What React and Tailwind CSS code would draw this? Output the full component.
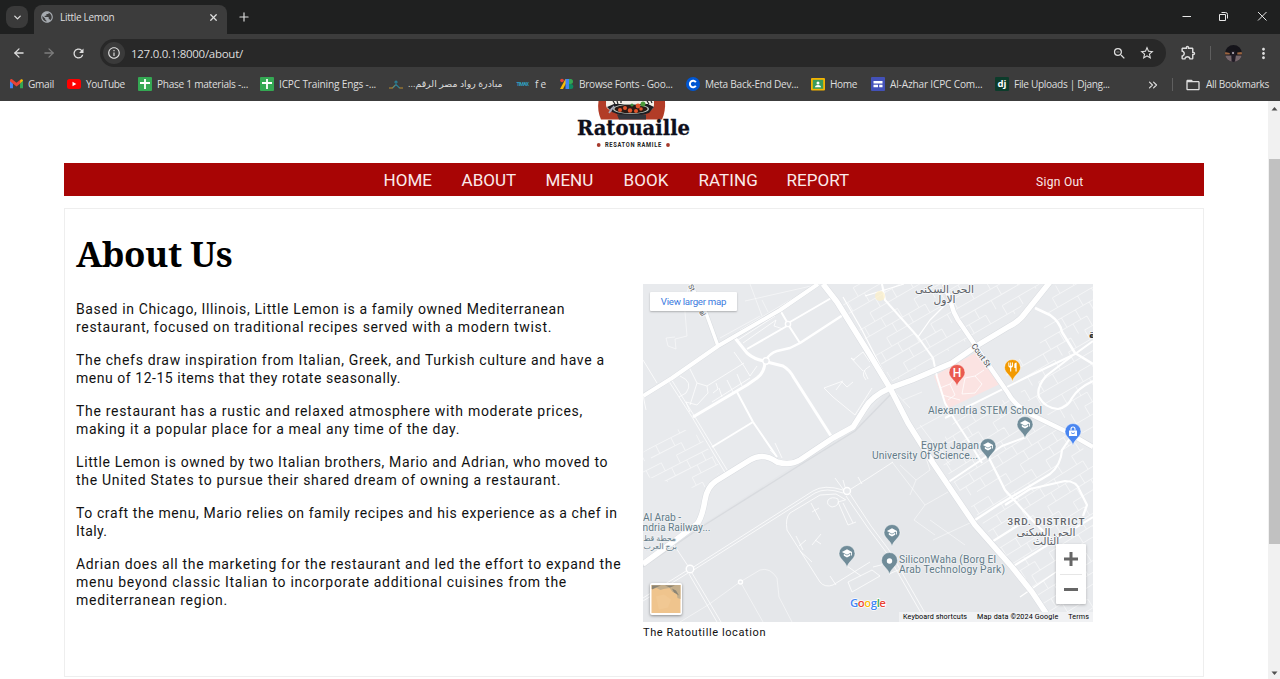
import React from "react";
import { ChevronDown, X, Plus, ArrowLeft, ArrowRight, ChevronsRight } from "lucide-react";
import { MdPublic, MdRefresh, MdInfoOutline, MdZoomOut, MdStarBorder, MdOutlineExtension, MdMoreVert, MdFolderOpen, MdSchool, MdRestaurant } from "react-icons/md";

const UI = "font-['Open_Sans','DejaVu_Sans',sans-serif]";

/* ---------- bookmark icons ---------- */
const GmailIcon = () => (
  <svg viewBox="0 0 24 18" className="w-[13px] h-[10px]">
    <path d="M0 2v15h5.500V8z" fill="#4285f4" />
    <path d="M24 2v15h-5.500V8z" fill="#34a853" />
    <path d="M18.500 1.500L21 0c2 0 3 1 3 3l-5.500 5z" fill="#fbbc04" />
    <path d="M0 3c0-3 3-4 5-2l7 5.500L19 1v7l-7 5.500L0 4z" fill="#ea4335" />
  </svg>
);
const YouTubeIcon = () => (
  <svg viewBox="0 0 14 10" className="w-[14px] h-[10px]">
    <rect width="14" height="10" rx="2.500" fill="#f00" />
    <path d="M5.500 2.800v4.400L9.300 5z" fill="#fff" />
  </svg>
);
const SheetIcon = () => (
  <svg viewBox="0 0 14 14" className="w-[14px] h-[14px]">
    <rect width="14" height="14" rx="1" fill="#34a853" />
    <path d="M7 2v10M2 6h10" stroke="#fff" strokeWidth="1.800" />
  </svg>
);
const PioneerIcon = () => (
  <svg viewBox="0 0 14 10" className="w-[14px] h-[10px]" fill="none">
    <path d="M0 9h3.500L6.500 6M10 8.500l1 .5h3" stroke="#b98b2f" strokeWidth="1.100" />
    <path d="M5.500 3.500L7 2l1.500 1.500M7 3v2.500L10.500 9M7 5.500L4 9" stroke="#2a7f96" strokeWidth="1.100" />
  </svg>
);
const TimaxIcon = () => (
  <svg viewBox="0 0 14 6" className="w-[14px] h-[6px]">
    <text x="0.500" y="5" fontSize="5" fontWeight="700" fill="#2f9fc0" textLength="12.500" fontFamily="Roboto">TIMAX</text>
  </svg>
);
const FontsIcon = () => (
  <svg viewBox="0 0 14 12" className="w-[14px] h-[12px]">
    <path d="M5.500 1L8 1.500 3 11H0z" fill="#fbbc04" />
    <circle cx="2" cy="2.500" r="1.800" fill="#ea4335" />
    <path d="M5.500 1H9v10H5.500z" fill="#4285f4" />
    <path d="M9 1h1.500a2.500 2.500 0 010 5H9z" fill="#34a853" />
    <path d="M9 6h1.800a2.500 2.500 0 010 5H9z" fill="#0f8a5f" />
  </svg>
);
const CourseraIcon = () => (
  <svg viewBox="0 0 14 14" className="w-[14px] h-[14px]">
    <circle cx="7" cy="7" r="7" fill="#0056d2" />
    <path d="M9.800 5.300a3.200 3.200 0 100 3.400" stroke="#fff" strokeWidth="2" fill="none" />
  </svg>
);
const ClassroomIcon = () => (
  <svg viewBox="0 0 14 13" className="w-[14px] h-[13px]">
    <rect width="14" height="12.500" rx="1" fill="#f4b400" />
    <rect x="1.800" y="1.800" width="10.400" height="9" fill="#3b9b5b" />
    <circle cx="7" cy="4.900" r="1.500" fill="#fff" />
    <path d="M4 9.200c0-3 6-3 6 0z" fill="#fff" />
  </svg>
);
const SitesIcon = () => (
  <svg viewBox="0 0 14 14" className="w-[14px] h-[14px]">
    <rect width="14" height="14" rx="1" fill="#4351b8" />
    <path d="M2.500 4h9v2.500h-9zM2.500 7.700H7v2.500H2.500zM8.200 7.700h3.300v2.500H8.200z" fill="#fff" />
  </svg>
);
const DjangoIcon = () => (
  <svg viewBox="0 0 14 14" className="w-[14px] h-[14px]">
    <rect width="14" height="14" rx="1" fill="#0c3c2b" />
    <text x="2.600" y="9.800" fontSize="9.500" fontWeight="700" fill="#fff" fontFamily="Open Sans">dj</text>
  </svg>
);

const bookmarks = [
  { icon: <GmailIcon />, label: "Gmail", box: "w-[57px]", text: "tracking-[-0.3px]" },
  { icon: <YouTubeIcon />, label: "YouTube", box: "w-[71px]", text: "tracking-[-0.38px]" },
  { icon: <SheetIcon />, label: "Phase 1 materials -...", box: "w-[122px]", text: "tracking-[-0.27px]" },
  { icon: <SheetIcon />, label: "ICPC Training Engs -...", box: "w-[129px]", text: "tracking-[-0.17px]" },
  { icon: <PioneerIcon />, label: "مبادرة رواد مصر الرقم...", box: "w-[127px]", text: "text-[9.4px]", dir: "rtl" },
  { icon: <TimaxIcon />, label: "f e", box: "w-[44px]", text: "tracking-[-0.3px]" },
  { icon: <FontsIcon />, label: "Browse Fonts - Goo...", box: "w-[126px]", text: "tracking-[-0.28px]" },
  { icon: <CourseraIcon />, label: "Meta Back-End Dev...", box: "w-[125px]", text: "tracking-[-0.26px]" },
  { icon: <ClassroomIcon />, label: "Home", box: "w-[60px]", text: "tracking-[-0.35px]" },
  { icon: <SitesIcon />, label: "Al-Azhar ICPC Com...", box: "w-[124px]", text: "tracking-[-0.17px]" },
  { icon: <DjangoIcon />, label: "File Uploads | Djang...", box: "w-[130px]", text: "tracking-[-0.33px]" },
];

function BrowserChrome() {
  return (
    <header className={"h-[101px] flex-none bg-[#3c3c3c] text-[#dedede] " + UI}>
      <div className="flex h-[34px] bg-[#1f2020] pl-[6px]">
        <div className="mt-[6px] flex h-[22px] w-[22px] items-center justify-center rounded-[8px] bg-[#3a3a3a]">
          <ChevronDown size={11} strokeWidth={2.800} />
        </div>
        <div className="ml-[6px] mt-[5px] flex h-[29px] w-[193px] items-center rounded-t-[8px] bg-[#3c3c3c] pb-[5px] pl-[6px] pr-[8px]">
          <MdPublic size={14} className="text-[#a6abb0]" />
          <span className="ml-[6px] pt-[1px] text-[10px] tracking-[-0.3px]">Little Lemon</span>
          <X size={11} strokeWidth={2.800} className="ml-auto" />
        </div>
        <Plus size={14} strokeWidth={2} className="ml-[10px] mt-[10px]" />
        <svg viewBox="0 0 100 20" className="ml-auto mt-[7px] h-[20px] w-[100px]" fill="none" stroke="#e8e8e8">
          <path d="M2.500 9.500h8.500" />
          <path d="M39.500 7.500h6v6h-6z M41.500 5.500h4q2 0 2 2v4" strokeWidth="1" />
          <path d="M78 5l8.500 8.500M86.500 5L78 13.500" />
        </svg>
      </div>
      <div className="flex h-[38px] items-center pl-[12px] pr-[10px]">
        <ArrowLeft size={14} strokeWidth={2.200} />
        <ArrowRight size={14} strokeWidth={2.200} className="ml-[16px] text-[#7d7d7d]" />
        <MdRefresh size={15} className="ml-[15px]" />
        <div className="ml-[14px] flex h-[28px] w-[1066px] items-center rounded-full bg-[#282828] pl-[3px] pr-[11px]">
          <span className="flex h-[22px] w-[22px] items-center justify-center rounded-full bg-[#3a3a3a]">
            <MdInfoOutline size={14} />
          </span>
          <span className="ml-[6px] pt-[1px] text-[11.5px] tracking-[-0.28px]">127.0.0.1:8000/about/</span>
          <MdZoomOut size={15} className="ml-auto" />
          <MdStarBorder size={16} className="ml-[12px]" />
        </div>
        <MdOutlineExtension size={17} className="ml-[14px] -mt-[2px]" />
        <span className="ml-[13px] h-[14px] w-px bg-[#5f5f5f]" />
        <svg viewBox="0 0 18 18" className="ml-[14px] h-[17px] w-[17px]">
          <clipPath id="avatar"><circle cx="9" cy="9" r="9" /></clipPath>
          <g clipPath="url(#avatar)">
            <rect width="18" height="18" fill="#15141a" />
            <path d="M0 7.500l5 1v1.500H0zM13 8l5-.5v2.500h-5z" fill="#9b6541" />
            <path d="M0 11h18v7H0z" fill="#75666c" />
            <path d="M6.500 6h4l1 5-1 7H7z" fill="#211c26" />
            <circle cx="8.500" cy="8.500" r="1.100" fill="#b8b3be" />
          </g>
        </svg>
        <MdMoreVert size={17} className="ml-auto -mr-[2px]" />
      </div>
      <div className="flex h-[25px] items-center pl-[10px] pr-[11px] text-[10.1px]">
        {bookmarks.map((b) => (
          <div key={b.label} className={"flex flex-none items-center gap-[5px] whitespace-nowrap " + b.box}>
            {b.icon}
            <span dir={b.dir} className={b.text}>{b.label}</span>
          </div>
        ))}
        <ChevronsRight size={14} strokeWidth={2} className="ml-[21px]" />
        <span className="ml-[12px] h-[13px] w-px bg-[#5f5f5f]" />
        <MdFolderOpen size={16} className="ml-[12px]" />
        <span className="ml-auto whitespace-nowrap tracking-[-0.32px]">All Bookmarks</span>
      </div>
    </header>
  );
}

/* ---------- restaurant logo ---------- */
function Logo() {
  return (
    <svg viewBox="570 101 130 55" className="ml-[506px] block h-[55px] w-[130px]">
      <path d="M598.500 101h66.500c.5 7-.5 13-3 18.500h-61c-2.500-5.500-3.500-11.500-2.500-18.500z" fill="#b23c27" />
      <path d="M606 101h48v4c0 6-9 10-22 10s-26-4-26-10z" fill="#f3efe8" />
      <path d="M607 107l7-3h34l6 3-5 6-7 2h-22l-8-3z" fill="#1d1d22" />
      <ellipse cx="631" cy="109" rx="18" ry="5" fill="#b9c4bd" />
      <ellipse cx="631" cy="109" rx="16.500" ry="4.200" fill="#2b1a15" />
      <g fill="#e2552c">
        <circle cx="620" cy="110" r="2" /><circle cx="625" cy="108" r="2" /><circle cx="630" cy="110.500" r="2.200" />
        <circle cx="636" cy="111" r="2" /><circle cx="638" cy="106" r="2.400" /><circle cx="641" cy="109" r="1.800" />
      </g>
      <path d="M613 101l2 3M617 101l1 3M621 101v2M647 101l2 3M651 101l1 2" stroke="#222" strokeWidth="1.200" />
      <circle cx="632" cy="105" r="1.600" fill="#3f8f3c" /><circle cx="643" cy="104" r="2.500" fill="#4b9a3a" />
      <path d="M612 108l-3 5M614 106l-4 6" stroke="#aab" strokeWidth="1.500" />
      <path d="M617 114.500h29v5h-27z" fill="#34363c" />
      <text x="577" y="134.500" fontSize="20" fontWeight="700" fontFamily="'DejaVu Serif',serif" textLength="113" lengthAdjust="spacingAndGlyphs" fill="#0e0f1c" stroke="#0e0f1c" strokeWidth="0.300">Ratouaille</text>
      <text x="605" y="147" fontSize="7.400" fontWeight="700" fontFamily="'Roboto',sans-serif" fill="#222" transform="translate(605 0) scale(.78 1) translate(-605 0)" textLength="72">RESATON RAMILE</text>
      <circle cx="598.700" cy="145" r="1.900" fill="#a63a2c" /><circle cx="668" cy="145" r="1.900" fill="#a63a2c" />
    </svg>
  );
}

const navItems = [
  ["HOME", "w-[78px]"], ["ABOUT", "w-[84px]"], ["MENU", "w-[78px]"],
  ["BOOK", "w-[75px]"], ["RATING", "w-[88px]"], ["REPORT", "w-[249.5px]"],
];

const paragraphs = [
  [["Based in Chicago, Illinois, Little Lemon is a family owned Mediterranean", "tracking-[0.63px]"],
   ["restaurant, focused on traditional recipes served with a modern twist.", "tracking-[0.67px]"]],
  [["The chefs draw inspiration from Italian, Greek, and Turkish culture and have a", "tracking-[0.667px]"],
   ["menu of 12-15 items that they rotate seasonally.", "tracking-[0.535px]"]],
  [["The restaurant has a rustic and relaxed atmosphere with moderate prices,", "tracking-[0.698px]"],
   ["making it a popular place for a meal any time of the day.", "tracking-[0.645px]"]],
  [["Little Lemon is owned by two Italian brothers, Mario and Adrian, who moved to", "tracking-[0.61px]"],
   ["the United States to pursue their shared dream of owning a restaurant.", "tracking-[0.7px]"]],
  [["To craft the menu, Mario relies on family recipes and his experience as a chef in", "tracking-[0.6px]"],
   ["Italy.", "tracking-[0.4px]"]],
  [["Adrian does all the marketing for the restaurant and led the effort to expand the", "tracking-[0.665px]"],
   ["menu beyond classic Italian to incorporate additional cuisines from the", "tracking-[0.726px]"],
   ["mediterranean region.", "tracking-[0.737px]"]],
];

/* ---------- map ---------- */

// Brick-like street grid covering a box, rotated about its centre.
function streetGrid(cx, cy, size, row, col) {
  let d = "";
  let k = 0;
  for (let y = -size; y <= size; y += row) {
    for (let x = -size + ((k * 7) % col); x <= size; x += col) {
      const pick = Math.abs(k * 5 + Math.round(x) * 3) % 7;
      if (pick > 1) d += `M${cx + x} ${cy + y}v${row}`;
      if (pick !== 3) d += `M${cx + x} ${cy + y}h${col}`;
    }
    k += 1;
  }
  return d;
}

const districts = [
  { id: "nw", shape: "842,284 1040,284 1015,314 968,340 893,382 840,300", grid: streetGrid(940, 330, 120, 10, 19), rot: "rotate(-30 940 330)" },
  { id: "ne", shape: "1056,284 1093,284 1093,438 1034,408 1000,368 1038,350", grid: streetGrid(1050, 350, 110, 11, 16), rot: "rotate(-30 1050 350)" },
  { id: "se", shape: "955,420 1008,398 1093,455 1093,622 1056,622 1000,548 952,480 936,452", grid: streetGrid(1020, 500, 150, 10, 17), rot: "rotate(-32 1020 500)" },
  { id: "sw", shape: "643,452 680,428 700,436 722,470 702,490 643,476", grid: streetGrid(680, 460, 60, 9, 17), rot: "rotate(-27 680 460)" },
];

const mainRoads = [
  ["M643 396L672 378L718 346L780 310L818 284", 4],
  ["M690 284L706 313L718 346", 3.5],
  ["M823 284L837 302L870 355L890 388L908 423L933 463L975 525L1012 567L1032 592L1052 622", 5.5],
  ["M1050 282L1022 317Q1015 324 1008 327L978 345L952 363L912 380L890 388Q872 396 865 408L853 427L833 438L800 460Q790 466 777 462Q763 452 750 460L716 481Q707 487 705 500Q702 518 697 524L673 542L643 564", 5.5],
  ["M944 284L951 303Q953 312 958 320L992 370L1008 393Q1014 405 1032 415L1065 431L1093 447", 4.5],
];

const roads = [
  ["M735 338L747 353Q755 360 765 361", 3],
  ["M765 361Q770 353 777 351L790 348L800 343L843 315", 2.5],
  ["M765 361Q765 372 757 378L747 385L693 417", 3],
  ["M767 362L783 366Q790 370 794 378L810 403L831 436", 3],
  ["M780 310L787 322M789 326L800 343", 2],
  ["M790 322L833 297M747 349L787 326", 2],
  ["M737 392L753 422L777 457", 2],
  ["M712 447L753 422", 2],
  ["M882 284L885 300L918 337L933 358L937 377L945 403L955 420L968 440L982 463", 2],
  ["M1035 308L1050 315Q1060 322 1062 332L1075 353L1093 364", 2.5],
  ["M1093 341L1075 354L1025 378L945 418", 2],
  ["M1072 356L1046 376Q1036 388 1039 397Q1045 408 1058 409Q1068 407 1072 398Q1078 388 1093 381", 2.2],
  ["M975 520L998 505L1050 474Q1061 465 1062 450L1073 434", 2.2],
  ["M985 450L1005 490L1032 520L1055 543", 2.2],
  ["M990 543L1030 518M1005 505L1030 489L1065 481Q1077 481 1080 491L1087 505L1083 516", 2.2],
  ["M947 483L1002 446L1026 437M1012 567L1093 517", 2],
  ["M865 296L904 284M843 297L862 330L884 373", 1.2],
  ["M1020 597L1056 572M950 300L930 320L918 337", 1.3],
];

const lanes = [
  "M668 380L692 417L718 461L726 474", "M671 379L695 417L721 460L729 473",
  "M692 568L813 491Q824 484 843 490M692 571L815 493Q826 487 843 493", "M851 489L870 477L893 462",
  "M686 571L643 598M688 573L643 601", "M688 566L674 545M692 573L721 622M689 574L717 622",
  "M846 496L868 528L886 552L921 613M850 494L871 526L889 550L925 613",
  "M820 495L790 513Q785 518 787 530L820 582Q825 588 833 585L870 562M820 495L836 494L846 500",
  "M743 343L776 320L774 326L783 329M738 340L775 316", "M643 360L657 383M643 395L646 410",
  "M680 376Q694 382 686 393L679 397M690 405L697 383L707 386L708 393L697 405L686 402L690 412M707 386L744 363M713 393L718 389L716 383M712 402L750 378",
  "M722 397L719 388M733 392L727 380M742 386L737 374M689 367L697 383M734 352L744 366L750 376L757 366",
  "M824 388L843 381M824 388L833 397L855 415L872 388M836 390L842 382L847 387L853 382M855 360L851 358L863 371M868 379L864 370",
  "M853 360L863 352L870 362M866 380Q859 372 870 366M811 503L820 520M812 512L819 508M845 500L838 502L848 525L856 522M843 503L853 523",
  "M828 500Q832 496 838 499Q840 506 832 507Q826 505 828 500M796 536L803 550M799 546L806 540M800 551L812 562M815 540L821 544M812 545L821 534M830 576L836 585",
  "M848 582L872 570L880 576L852 592ZM873 567L893 562M889 574L903 568M847 566L861 576",
  "M843 480L845 487M858 477L862 484M843 489L835 478M777 457L770 450M775 443L782 458",
  "M940 388L950 384L955 395L948 400M965 378L975 376L982 384L975 393L962 394L965 378M950 384L957 376M942 395L960 400M975 376L984 370",
];

const faintLanes = [
  "M690 284L684 300L687 336L675 339L676 349L668 346L666 338L675 337M750 284L762 316M720 338L760 316",
  "M740 330L792 299M762 300L768 312M745 301L820 284",
  "M708 605L740 582L760 570Q770 567 777 578L779 597L792 622M741 583L763 622M708 605L680 622",
  "M892 462L925 505L948 492M930 520L965 545M925 505L914 520L935 535M900 465L916 480L910 495M916 480L930 470L925 455M933 540L972 522",
  "M895 392L910 408M903 400L922 392M915 430L948 412M860 420L843 436M920 425L950 465M930 450L955 440",
];

function Pin({ x, y, color, children }) {
  return (
    <g transform={`translate(${x} ${y})`}>
      <path d="M0 13.500C-1 7.500-8 5-8-.5A8 8 0 018-.5C8 5 1 7.500 0 13.500z" fill={color} stroke="#fff" strokeOpacity="0.600" strokeWidth="0.800" />
      {children}
    </g>
  );
}

const schoolPins = [[1025, 425], [988, 447], [892, 533], [847, 554]];

// [text, x, baseline, width]
const placeLabels = [
  ["Alexandria STEM School", 928, 413.5, 114],
  ["University Of Science...", 872, 459, 106],
  ["Egypt Japan", 921, 448.5, 58],
  ["Arab Technology Park)", 899, 573, 106],
  ["SiliconWaha (Borg El", 899, 562.5, 97],
  ["ndria Railway...", 642.5, 531, 68],
  ["Al Arab -", 643, 520.500, 38],
];

function MapArt() {
  return (
    <svg viewBox="643 284 450 338" className="block h-[338px] w-[450px]" fontFamily="Roboto,'DejaVu Sans',sans-serif">
      <rect x="643" y="284" width="450" height="338" fill="#e8eaed" />
      <path d="M643 564L703 524L797 464L853 430L890 388L933 463L1052 622L643 622z" fill="#e5e7ea" />
      {districts.map((d) => (
        <g key={d.id}>
          <clipPath id={d.id}><polygon points={d.shape} /></clipPath>
          <g clipPath={`url(#${d.id})`}>
            <path d={d.grid} transform={d.rot} fill="none" stroke="#fff" strokeOpacity="0.550" strokeWidth="0.900" />
          </g>
        </g>
      ))}
      <path d="M934 376L975 353L1002 383L947 409z" fill="#fbe3e2" />
      <path d="M893 392L855 431L800 465L703 526L643 567" fill="none" stroke="#d3d6da" strokeWidth="1.300" opacity="0.700" />
      {faintLanes.map((d) => (
        <path key={d} d={d} fill="none" stroke="#fff" strokeOpacity="0.550" strokeWidth="0.900" strokeLinejoin="round" />
      ))}
      {lanes.map((d) => (
        <path key={d} d={d} fill="none" stroke="#fff" strokeOpacity="0.850" strokeWidth="0.900" strokeLinejoin="round" />
      ))}
      {roads.map(([d, w]) => (
        <path key={d} d={d} fill="none" stroke="#fff" strokeWidth={w} strokeLinejoin="round" />
      ))}
      {mainRoads.map(([d, w]) => (
        <path key={d} d={d} fill="none" stroke="#d9dce0" strokeWidth={w + 1} strokeLinejoin="round" />
      ))}
      {mainRoads.map(([d, w]) => (
        <path key={d} d={d} fill="none" stroke="#fff" strokeWidth={w} strokeLinejoin="round" />
      ))}
      <g fill="#e8eaed" stroke="#fff" strokeWidth="1.400">
        <circle cx="788" cy="324" r="2.600" /><circle cx="766" cy="361" r="3.200" />
        <circle cx="690" cy="569" r="3.800" /><circle cx="847" cy="491" r="3.500" /><circle cx="740.500" cy="582" r="2" />
      </g>
      <circle cx="880" cy="296" r="5" fill="#fcf0c8" opacity="0.700" />

      <g fill="#637b88" stroke="#f0f2f4" strokeWidth="1.600" strokeLinejoin="round" paintOrder="stroke" fontSize="10.300">
        {placeLabels.map(([t, x, y, w]) => (
          <text key={t} x={x} y={y} textLength={w}>{t}</text>
        ))}
        <g fontSize="7.800">
          <text x="676" y="540.500" textAnchor="end" direction="ltr">محطة قط</text>
          <text x="677" y="549" textAnchor="end" direction="ltr">برج العرب</text>
        </g>
      </g>
      <g fill="#5f6368" stroke="#f4f6f8" strokeWidth="2" strokeLinejoin="round" paintOrder="stroke">
        <text x="1007.500" y="525.300" fontSize="9.800" fontWeight="500" textLength="77">3RD. DISTRICT</text>
        <g fontSize="10.800" textAnchor="middle">
          <text x="944.500" y="293">الحى السكنى</text>
          <text x="944.500" y="302.500">الاول</text>
          <text x="1046" y="535.500">الحى السكنى</text>
          <text x="1046" y="545">الثالث</text>
        </g>
        <text x="1089" y="338" fontSize="11" fontWeight="700" fill="#333">ة</text>
        <text fontSize="8" fill="#444" transform="translate(971 346) rotate(54)" textLength="27">Court St</text>
        <text fontSize="7" fill="#555" transform="translate(688 286) rotate(62)">St</text>
        <text fontSize="7" fill="#555" transform="translate(699 312) rotate(62)">al</text>
      </g>

      <Pin x={957} y={373} color="#ea5a50">
        <text x="0" y="4.300" fontSize="12" fontWeight="500" fill="#fff" textAnchor="middle">H</text>
      </Pin>
      <Pin x={1012.5} y={368} color="#f29900">
        <MdRestaurant x="-5.500" y="-6.500" size={11} color="#fff" />
      </Pin>
      <Pin x={1073} y={432} color="#4a86f0">
        <path d="M-2-1.500v-1.500a2 2 0 014 0v1.500" fill="none" stroke="#fff" strokeWidth="1.100" />
        <path d="M-4-1.500h8v5.500h-8z" fill="#fff" />
        <path d="M-2 .7q2 2 4 0" stroke="#4a86f0" strokeWidth="0.900" fill="none" />
      </Pin>
      {schoolPins.map(([x, y]) => (
        <Pin key={x} x={x} y={y} color="#708c99">
          <MdSchool x="-5.500" y="-6.200" size={11} color="#fff" />
        </Pin>
      ))}
      <Pin x={889.5} y={561} color="#708c99"><circle r="2.700" fill="#fff" /></Pin>

      <text x="850" y="607" fontSize="11.500" fontFamily="'Open Sans',sans-serif" fontWeight="600" textLength="36" stroke="#fff" strokeWidth="1.500" paintOrder="stroke">
        <tspan fill="#4285f4">G</tspan><tspan fill="#ea4335">o</tspan><tspan fill="#fbbc04">o</tspan>
        <tspan fill="#4285f4">g</tspan><tspan fill="#34a853">l</tspan><tspan fill="#ea4335">e</tspan>
      </text>
    </svg>
  );
}

function MapPanel() {
  return (
    <div className="relative h-[338px] w-[450px] overflow-hidden font-['Roboto',sans-serif]">
      <MapArt />
      <div className="absolute left-[7px] top-[8px] flex h-[19px] w-[87px] items-center justify-center whitespace-nowrap rounded-[1px] bg-white pt-px text-[9.7px] tracking-[-0.29px] text-[#3b7be0] shadow-[0_1px_2px_rgba(0,0,0,0.25)]">
        View larger map
      </div>
      <svg viewBox="0 0 32 31" className="absolute left-[7px] top-[299px] h-[32px] w-[32px] rounded-[2px] bg-white shadow-[0_1px_3px_rgba(0,0,0,0.4)]">
        <rect x="1.500" y="1.500" width="29" height="28" fill="#efc48d" />
        <path d="M1.500 1.500h29v14l-3-1-1-5-4-1-3-4-6 1-3 1-4-2-5 1z" fill="#c4ae8b" />
        <path d="M2 2h9l-5 2-4 2zM15 2l5 2 5-2zM22 5l4 2 3 5-5-3z" fill="#8b8474" />
        <path d="M6 13l8-2 7 5-3 8-9 2z" fill="#f1c893" />
      </svg>
      <div className="absolute left-[413px] top-[260px] flex h-[60px] w-[30px] flex-col rounded-[1px] bg-white shadow-[0_1px_3px_rgba(0,0,0,0.25)]">
        <svg viewBox="0 0 30 60" className="h-[60px] w-[30px]" stroke="#666" strokeWidth="3">
          <path d="M8 15h14M15 8v14M8 45.500h14" />
          <path d="M4 30.500h22" stroke="#e6e6e6" strokeWidth="1" />
        </svg>
      </div>
      <div className="absolute bottom-0 right-0 flex h-[10px] w-[194px] items-center justify-between whitespace-nowrap bg-[#f1f2f4] pl-[4px] pr-[4px] text-[7.2px] text-black">
        <span className="tracking-[0.1px]">Keyboard shortcuts</span>
        <span className="tracking-[0.14px]">Map data ©2024 Google</span>
        <span className="tracking-[0.1px]">Terms</span>
      </div>
    </div>
  );
}

export default function App() {
  return (
    <div className="flex h-[679px] w-[1280px] flex-col overflow-hidden bg-white">
      <BrowserChrome />
      <div className="flex min-h-0 flex-1 justify-between">
        <main className="ml-[63.5px] w-[1140.5px] font-['Roboto',sans-serif] text-[#111]">
          <div className="h-[62px]"><Logo /></div>
          <nav className="flex h-[33px] items-center bg-[#a80505] pl-[320px] text-[17px] text-[#fbeaea]">
            {navItems.map(([label, box]) => (
              <a key={label} className={"flex-none pt-[2px] tracking-[0.05px] " + box}>{label}</a>
            ))}
            <a className="whitespace-nowrap pt-[4px] text-[12px] tracking-[0.3px]">Sign Out</a>
          </nav>
          <section className="mt-[12px] flex h-[469px] border border-[#eeeeee] pl-[11.5px]">
            <div className="w-[567px]">
              <h1 className="mt-[18px] h-[54px] whitespace-nowrap font-['Noto_Serif','DejaVu_Serif',serif] text-[35px] font-bold leading-[54px] tracking-[-0.5px] text-black">About Us</h1>
              <div className="mt-[19px] flex flex-col gap-[15px] text-[14px] leading-[18px]">
                {paragraphs.map((lines) => (
                  <p key={lines[0][0]} className="whitespace-nowrap">
                    {lines.map(([text, tracking]) => (
                      <span key={text} className={"block " + tracking}>{text}</span>
                    ))}
                  </p>
                ))}
              </div>
            </div>
            <figure className="mt-[75px] w-[450px]">
              <MapPanel />
              <figcaption className="mt-[3px] text-[11px] leading-[16px] tracking-[0.6px]">The Ratoutille location</figcaption>
            </figure>
          </section>
        </main>
        <div className="flex w-[12px] flex-col items-center bg-[#f1f1f1]">
          <svg viewBox="0 0 12 58" className="h-[58px] w-[12px]"><path d="M3.500 9.500L6.500 6l3 3.500z" fill="#505050" /></svg>
          <div className="h-[385px] w-[11px] self-end bg-[#c1c1c1]" />
          <svg viewBox="0 0 12 10" className="mt-auto h-[10px] w-[12px]"><path d="M3.500 2.500L6.500 6l3-3.500z" fill="#505050" /></svg>
        </div>
      </div>
    </div>
  );
}
